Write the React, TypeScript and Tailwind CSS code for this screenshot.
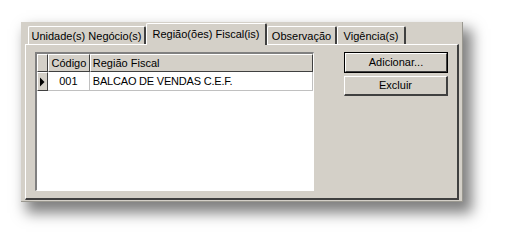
export default function App() {
  const tabs = [
    { label: "Unidade(s) Negócio(s)", w: "w-[118px]" },
    { label: "Região(ões) Fiscal(is)", w: "w-[121px]", active: true },
    { label: "Observação", w: "w-[70px]" },
    { label: "Vigência(s)", w: "w-[69px]" },
  ];

  return (
    <div className="w-[506px] h-[244px] bg-white pt-[22px] pl-[21px] font-['Liberation_Sans',Arial,sans-serif] text-[11px] text-black">
      <div className="w-[442px] h-[180px] bg-[#d4d0c8] pt-px pl-1 border-r border-b border-[#9a9890] shadow-[7px_9px_13px_2px_rgba(0,0,0,0.5)]">
        {/* tab strip */}
        <div className="flex items-end h-[21px] pl-[3px]">
          {tabs.map((t) =>
            t.active ? (
              <div
                key={t.label}
                className={`${t.w} h-[22px] -mb-px relative z-10 bg-[#d4d0c8] border-t border-l border-white border-r-2 border-r-[#404040] rounded-t-[2px] flex items-start justify-center pt-[5px] leading-none`}
              >
                {t.label}
              </div>
            ) : (
              <div
                key={t.label}
                className={`${t.w} h-[18px] bg-[#d4d0c8] border-t border-l border-white border-r-2 border-r-[#404040] rounded-t-[2px] flex items-start justify-center pt-[4px] leading-none`}
              >
                {t.label}
              </div>
            )
          )}
        </div>

        {/* tab page */}
        <div className="w-[434px] h-[156px] border-t border-l border-white border-r-2 border-b-2 border-r-[#404040] border-b-[#404040] pt-[7px] pl-[9px] flex">
          {/* grid */}
          <div className="w-[279px] h-[139px] bg-white border-t-2 border-l-2 border-t-[#808080] border-l-[#808080] border-r border-b border-white">
            <div className="flex h-[18px] bg-[#d4d0c8]">
              <div className="w-[11px] border-t border-l border-white border-r border-b border-r-[#404040] border-b-[#404040]" />
              <div className="w-[42px] border-t border-l border-white border-r border-b border-r-[#404040] border-b-[#404040] flex items-center justify-center leading-none">
                Código
              </div>
              <div className="w-[224px] border-t border-l border-white border-r border-b border-r-[#404040] border-b-[#404040] flex items-center pl-[2px] leading-none">
                Região Fiscal
              </div>
            </div>
            <div className="flex h-[19px]">
              <div className="w-[11px] bg-[#d4d0c8] border-t border-l border-white border-r border-b border-r-[#404040] border-b-[#404040] flex items-center justify-center">
                <svg width="6" height="10" viewBox="0 0 6 10">
                  <path d="M1 0.5 L5.5 5 L1 9.5 Z" fill="#000" />
                </svg>
              </div>
              <div className="w-[42px] border-r border-b border-[#c0c0c0] flex items-center justify-center leading-none">
                001
              </div>
              <div className="w-[224px] border-r border-b border-[#c0c0c0] flex items-center pl-[3px] leading-none tracking-[-0.2px]">
                BALCAO DE VENDAS C.E.F.
              </div>
            </div>
          </div>

          {/* buttons */}
          <div className="ml-[30px] flex flex-col gap-[3px]">
            <div className="w-[104px] h-[21px] border border-black">
              <div className="w-full h-full border-t border-l border-white border-r border-b border-r-[#404040] border-b-[#404040] flex items-center justify-center leading-none">
                Adicionar...
              </div>
            </div>
            <div className="w-[104px] h-[20px] border-t border-l border-white border-r-2 border-b-2 border-r-[#404040] border-b-[#404040] flex items-center justify-center leading-none">
              Excluir
            </div>
          </div>
        </div>
      </div>
    </div>
  );
}
